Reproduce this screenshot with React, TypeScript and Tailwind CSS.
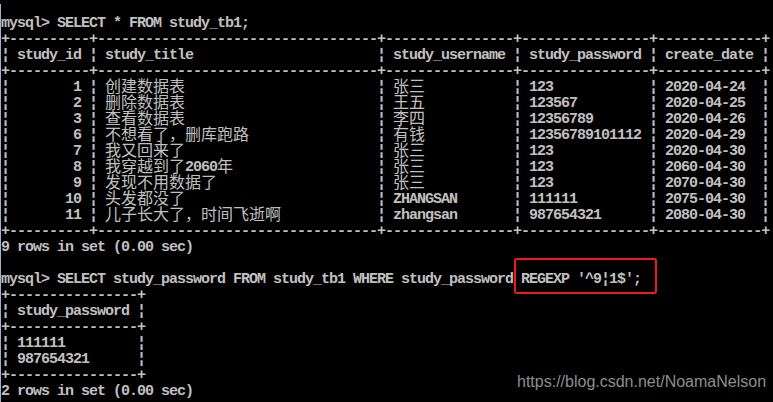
import React from "react";

const COLS = [80, 280, 128, 128, 104];
const CJK = /([\u3000-\u303f\u4e00-\u9fff\uff00-\uffef]+)/;

function Mixed({ text }: { text: string }) {
  const parts = text.split(CJK).filter((p) => p.length > 0);
  return (
    <>
      {parts.map((p, i) =>
        CJK.test(p) ? (
          <span
            key={i}
            className="inline-block align-top h-[16px] leading-[10px] font-normal text-[16px] tracking-[0px] text-[#c0c0c0]"
            style={{ fontFamily: '"Noto Sans CJK SC", sans-serif' }}
          >
            {p}
          </span>
        ) : (
          <span key={i}>{p}</span>
        )
      )}
    </>
  );
}

function Line({ children }: { children?: React.ReactNode }) {
  return <div className="h-[16px] leading-[16px] whitespace-pre">{children}</div>;
}

function Border({ cols }: { cols: number[] }) {
  return <Line>{"+" + cols.map((w) => "-".repeat(w / 8)).join("+") + "+"}</Line>;
}

function Row({ cols, cells, rightFirst }: { cols: number[]; cells: string[]; rightFirst?: boolean }) {
  return (
    <div className="flex h-[16px] leading-[16px] whitespace-pre">
      {cells.map((c, i) => (
        <React.Fragment key={i}>
          <span className="w-[8px] shrink-0">¦</span>
          <div
            className={
              i === 0 && rightFirst
                ? "shrink-0 h-[16px] text-right pr-[8px] overflow-visible"
                : "shrink-0 h-[16px] pl-[8px] overflow-visible"
            }
            style={{ width: cols[i] }}
          >
            <Mixed text={c} />
          </div>
        </React.Fragment>
      ))}
      <span className="w-[8px] shrink-0">¦</span>
    </div>
  );
}

const rows: string[][] = [
  ["1", "创建数据表", "张三", "123", "2020-04-24"],
  ["2", "删除数据表", "王五", "123567", "2020-04-25"],
  ["3", "查看数据表", "李四", "12356789", "2020-04-26"],
  ["6", "不想看了，删库跑路", "有钱", "12356789101112", "2020-04-29"],
  ["7", "我又回来了", "张三", "123", "2020-04-30"],
  ["8", "我穿越到了2060年", "张三", "123", "2060-04-30"],
  ["9", "发现不用数据了", "张三", "123", "2070-04-30"],
  ["10", "头发都没了", "ZHANGSAN", "111111", "2075-04-30"],
  ["11", "儿子长大了，时间飞逝啊", "zhangsan", "987654321", "2080-04-30"],
];

export default function App() {
  const mono = { fontFamily: '"Liberation Mono", monospace' };
  return (
    <div className="w-[773px] h-[402px] bg-black relative overflow-hidden">
      <div className="mt-[4px] h-[398px] border-l border-[#a7b0c0] pt-[12px]">
        <div
          className="text-[#c0c0c0] font-bold text-[15px] tracking-[-1px]"
          style={mono}
        >
          <Line>mysql&gt; SELECT * FROM study_tb1;</Line>
          <Border cols={COLS} />
          <Row
            cols={COLS}
            cells={["study_id", "study_title", "study_username", "study_password", "create_date"]}
          />
          <Border cols={COLS} />
          {rows.map((r, i) => (
            <Row key={i} cols={COLS} cells={r} rightFirst />
          ))}
          <Border cols={COLS} />
          <Line>9 rows in set (0.00 sec)</Line>
          <Line> </Line>
          <Line>mysql&gt; SELECT study_password FROM study_tb1 WHERE study_password REGEXP '^9¦1$';</Line>
          <Border cols={[128]} />
          <Row cols={[128]} cells={["study_password"]} />
          <Border cols={[128]} />
          <Row cols={[128]} cells={["111111"]} />
          <Row cols={[128]} cells={["987654321"]} />
          <Border cols={[128]} />
          <Line>2 rows in set (0.00 sec)</Line>
        </div>
      </div>
      <div className="absolute left-[514px] top-[258px] w-[143px] h-[36px] border-[2px] border-[#f01c14] rounded-[3px]" />
      <div
        className="absolute left-[517px] top-[374px] text-[16px] leading-[16px] text-[#8e8e8e] whitespace-nowrap"
        style={{ fontFamily: '"Liberation Sans", Arial, sans-serif' }}
      >
        https://blog.csdn.net/NoamaNelson
      </div>
    </div>
  );
}
